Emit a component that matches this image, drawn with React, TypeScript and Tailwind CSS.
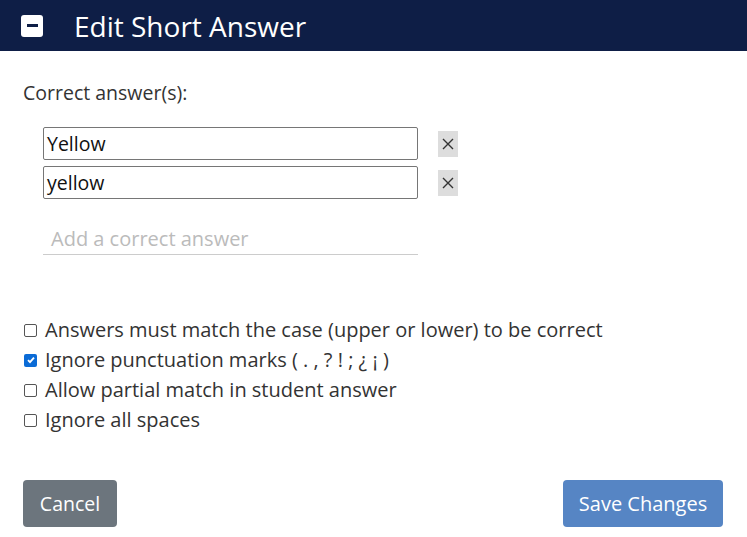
import React from "react";

function Row({ value }: { value: string }) {
  return (
    <div className="flex items-center">
      <div className="w-[375px] h-[33px] border border-[#767676] rounded-[2px] flex items-center px-[3px] text-[19.5px] text-[#111]">{value}</div>
      <div className="ml-[20px] w-[20px] h-[26px] bg-[#dddddd] flex items-center justify-center">
        <svg width="12" height="12" viewBox="0 0 12 12"><path d="M1 1L11 11M11 1L1 11" stroke="#333" strokeWidth="1.4" /></svg>
      </div>
    </div>
  );
}

function Check({ label, checked }: { label: string; checked?: boolean }) {
  return (
    <label className="flex items-center h-[30px]">
      {checked ? (
        <span className="w-[13px] h-[13px] ml-[1px] rounded-[2px] bg-[#0b6bd6] flex items-center justify-center">
          <svg width="10" height="10" viewBox="0 0 10 10"><path d="M2 5.2L4 7.2L8 2.6" stroke="white" strokeWidth="1.8" fill="none" /></svg>
        </span>
      ) : (
        <span className="w-[13px] h-[13px] ml-[1px] rounded-[2px] border border-[#555] bg-white" />
      )}
      <span className="ml-[8px] text-[20px] text-[#333]">{label}</span>
    </label>
  );
}

export default function App() {
  return (
    <div className="w-[747px] h-[537px] bg-white flex flex-col" style={{ fontFamily: '"Open Sans", sans-serif' }}>
      <div className="h-[51px] bg-[#0e1e46] flex items-center px-[21px]">
        <div className="w-[22px] h-[22px] bg-white rounded-[3px] flex items-center justify-center">
          <div className="w-[11px] h-[3px] bg-[#0e1e46]" />
        </div>
        <div className="ml-[31px] text-white text-[28px] leading-none">Edit Short Answer</div>
      </div>
      <div className="pl-[23px] pr-[24px] pt-[29px] flex flex-col flex-1">
        <div className="text-[19.5px] text-[#333] leading-[26px]">Correct answer(s):</div>
        <div className="pl-[20px] mt-[21px] flex flex-col gap-[6px]">
          <Row value="Yellow" />
          <Row value="yellow" />
        </div>
        <div className="ml-[20px] mt-[24px] w-[375px] border-b border-[#cccccc] h-[32px] flex items-center px-[8px] text-[20px] text-[#bbbbbb]">Add a correct answer</div>
        <div className="mt-[60px] flex flex-col">
          <Check label="Answers must match the case (upper or lower) to be correct" />
          <Check label="Ignore punctuation marks ( . , ? ! ; ¿ ¡ )" checked />
          <Check label="Allow partial match in student answer" />
          <Check label="Ignore all spaces" />
        </div>
        <div className="mt-auto mb-[10px] flex justify-between">
          <button className="w-[94px] h-[47px] rounded-[4px] bg-[#6c757d] text-white text-[19.5px]">Cancel</button>
          <button className="w-[160px] h-[47px] rounded-[4px] bg-[#5685c4] text-white text-[20px]">Save Changes</button>
        </div>
      </div>
    </div>
  );
}
